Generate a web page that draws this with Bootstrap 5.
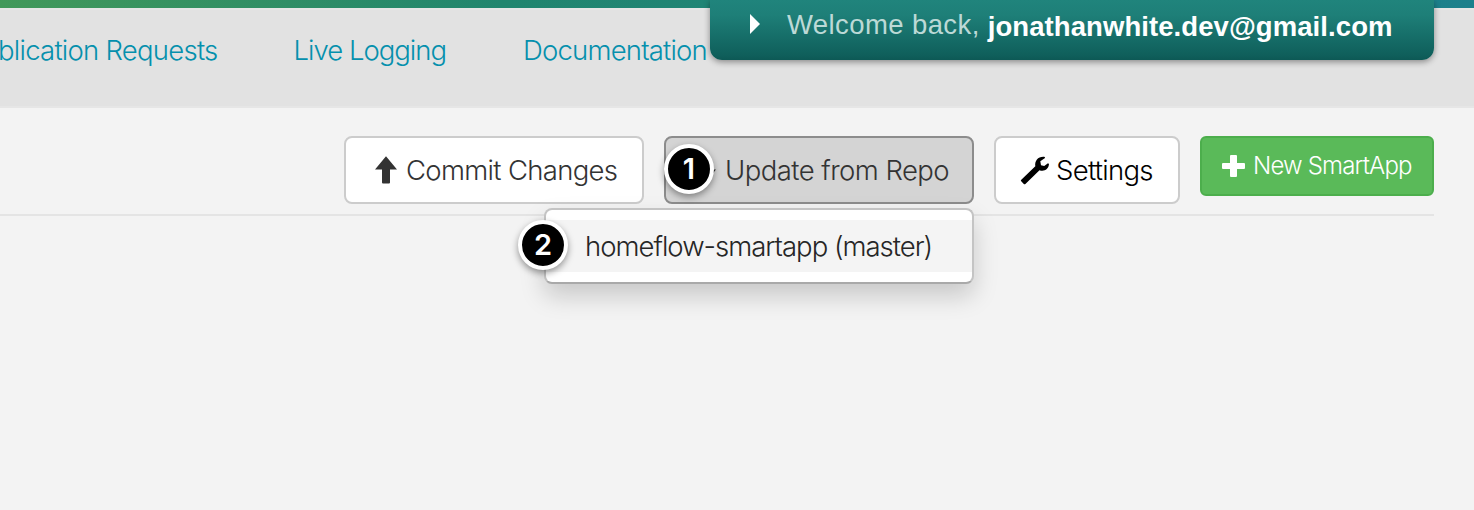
<!DOCTYPE html>
<html lang="en">
<head>
<meta charset="utf-8">
<meta name="viewport" content="width=device-width, initial-scale=1">
<title>My SmartApps</title>
<link href="https://cdn.jsdelivr.net/npm/bootstrap@5.3.0/dist/css/bootstrap.min.css" rel="stylesheet">
<style>
  body { background: #f3f3f3; color: #333; font-family: Inter, "Liberation Sans", sans-serif; font-weight: 300; font-size: 27.5px; line-height: 40px; height: 510px; }
  .stripe { height: 8px; background: linear-gradient(90deg, #42995a 0, #21866f 34%, #1c808c 100%); }
  .site-nav { height: 100px; background: #e2e2e2; border-top: 2px solid #e6e6e6; border-bottom: 2px solid #e6e6e6; padding-top: 20px; }
  .site-nav .nav-link { color: #0590ad; padding: 0; margin-top: 0; }
  .l1 { margin-left: -2px; letter-spacing: -.75px; }
  .l2 { margin-left: 76px; letter-spacing: -1px; }
  .l3 { margin-left: 77px; letter-spacing: -.8px; }
  .welcome { right: 40px; width: 724px; height: 60px; padding: 0 0 0 40px; border-radius: 0 0 12px 12px; background: linear-gradient(#20847c 0, #1e7f78 25%, #0f5f5b 92%, #0d5855 100%); box-shadow: 0 2px 6px rgba(0,0,0,.4); color: #fff; z-index: 2; }
  .welcome svg { margin-top: 14px; }
  .hello { margin: 5px 0 0 27px; font: 400 27.5px/40px "Liberation Sans", sans-serif; letter-spacing: .4px; color: #bcd9d6; }
  .mail { margin: 7px 0 0 8px; font: 700 27.5px/40px "Liberation Sans", sans-serif; letter-spacing: .08px; }
  .tools { margin-right: 40px; padding-top: 28px; height: 108px; gap: 20px; border-bottom: 2px solid #e4e4e4; }
  .tools .btn { height: 68px; border: 2px solid #ccc; border-radius: 8px; background: #fff; color: #333; font-size: 27.5px; font-weight: 300; line-height: 40px; padding: 0; }
  .tools .commit { width: 300px; padding-left: 28px; }
  .tools .update { width: 310px; background: #d4d4d4; border-color: #8c8c8c; padding-left: 28px; }
  .tools .settings { width: 186px; color: #000; padding-left: 24px; }
  .tools .fresh { width: 234px; height: 60px; background: #5aba59; border-color: #4cae4c; color: #fff; font-size: 24px; padding-left: 20px; border-radius: 6px; }
  .repo-menu { top: 72px; right: 0; left: auto; width: 430px; padding: 10px 0; border: 2px solid #c4c4c4; border-bottom-color: #a9a9a9; border-radius: 8px; box-shadow: 0 12px 24px rgba(0,0,0,.175); background: #fff; z-index: 3; }
  .repo-menu .dropdown-item { height: 52px; padding: 6px 0 0 39px; color: #262626; background: #f4f4f4; font-size: 27.5px; font-weight: 300; line-height: 40px; }
  .step { width: 50px; height: 50px; border: 4px solid #fff; background: #000; color: #fff; font: 600 29px/41px Inter, "Liberation Sans", sans-serif; box-shadow: 0 3px 7px rgba(0,0,0,.4); z-index: 4; text-align: center; }
  .step-one { left: 0; top: 8px; }
  .step-two { left: -28px; top: 10px; }
  .t-commit { letter-spacing: -.68px; } .t-update { letter-spacing: -.55px; }
  .t-set { letter-spacing: -.7px; margin-left: -1px; } .t-new { letter-spacing: -.82px; } .t-repo { letter-spacing: -1px; }
</style>
</head>
<body class="overflow-hidden position-relative">
<div class="stripe"></div>
<nav class="site-nav d-flex text-nowrap">
  <a class="nav-link l1" href="#">blication Requests</a>
  <a class="nav-link l2" href="#">Live Logging</a>
  <a class="nav-link l3" href="#">Documentation</a>
</nav>
<div class="welcome position-absolute top-0 d-flex align-items-start text-nowrap">
  <svg width="10" height="20" viewBox="0 0 10 20"><path fill="#fff" d="M0 0 10 10 0 20z"/></svg>
  <span class="hello">Welcome back,</span>
  <strong class="mail">jonathanwhite.dev@gmail.com</strong>
</div>
<main>
  <div class="tools d-flex justify-content-end align-items-start text-nowrap">
    <button class="btn commit d-flex align-items-center">
      <svg class="me-2" width="24" height="28" viewBox="0 0 24 28"><path fill="#333" d="M12 .3 23 13.5H16V26.500q0 1-1 1H9q-1 0-1-1V13.500H1z"/></svg>
      <span class="t-commit">Commit Changes</span>
    </button>
    <div class="dropdown position-relative">
      <button class="btn update d-flex align-items-center">
        <svg width="31" height="28" viewBox="0 0 31 28"><path fill="#333" d="M8 1h6v12.500h8L11 27 0 13.500h8z"/></svg>
        <span class="t-update">Update from Repo</span>
      </button>
      <span class="step step-one rounded-circle position-absolute">1</span>
      <div class="dropdown-menu repo-menu show">
        <a class="dropdown-item" href="#"><span class="t-repo">homeflow-smartapp (master)</span></a>
        <span class="step step-two rounded-circle position-absolute">2</span>
      </div>
    </div>
    <button class="btn settings d-flex align-items-center">
      <svg class="me-2" width="29" height="29" viewBox="0 0 29 29"><path d="M1.300 23.700 15.300 10.300C14.500 4.500 18.500 0 24.800.9L25 2 20.300 5.200 21 9.200 24.200 10 28 7.200 29 8C28.500 13.600 24 15.800 19.500 14.200L5.400 28Q4.600 28.700 3.800 28L1 25Q.5 24.400 1.300 23.700z"/></svg>
      <span class="t-set">Settings</span>
    </button>
    <button class="btn fresh d-flex align-items-center">
      <svg class="me-2" width="23" height="22" viewBox="0 0 23 22"><path fill="#fff" d="M9 0h5q1 0 1 1v7h7q1 0 1 1v4q0 1-1 1h-7v7q0 1-1 1H9q-1 0-1-1v-7H1q-1 0-1-1V9q0-1 1-1h7V1q0-1 1-1z"/></svg>
      <span class="t-new">New SmartApp</span>
    </button>
  </div>
</main>
<script src="https://cdn.jsdelivr.net/npm/bootstrap@5.3.0/dist/js/bootstrap.bundle.min.js"></script>
</body>
</html>
